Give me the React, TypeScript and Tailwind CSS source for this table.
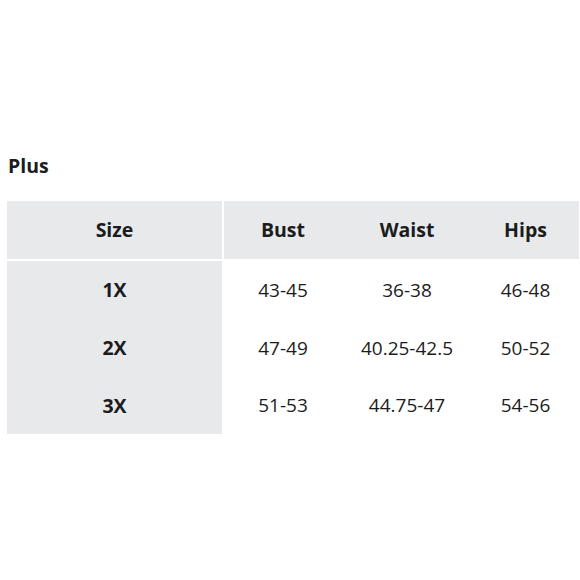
export default function App() {
  const rows = [
    { size: "1X", bust: "43-45", waist: "36-38", hips: "46-48" },
    { size: "2X", bust: "47-49", waist: "40.25-42.5", hips: "50-52" },
    { size: "3X", bust: "51-53", waist: "44.75-47", hips: "54-56" },
  ]

  return (
    <div className="w-[580px] h-[580px] bg-white pt-[152px] pl-[7px] text-[#1c1c1c]" style={{ fontFamily: '"Open Sans", sans-serif' }}>
      <h2 className="text-[19.5px] font-bold leading-[28px] pl-px">Plus</h2>

      <div className="mt-[21px] w-[572px]">
        {/* header */}
        <div className="flex gap-[2px] h-[58px]">
          <div className="w-[215px] bg-[#e8e9eb] flex items-center justify-center text-[19.5px] font-bold">Size</div>
          <div className="flex-1 bg-[#e8e9eb] grid grid-cols-[118px_130px_1fr] items-center text-center text-[19.5px] font-bold">
            <div>Bust</div>
            <div>Waist</div>
            <div>Hips</div>
          </div>
        </div>

        {/* body */}
        <div className="flex gap-[2px] mt-[2px]">
          <div className="w-[215px] bg-[#e8e9eb] flex flex-col">
            {rows.map((r) => (
              <div key={r.size} className="h-[58px] last:h-[57px] flex items-center justify-center text-[19.5px] font-bold">
                {r.size}
              </div>
            ))}
          </div>
          <div className="flex-1 flex flex-col">
            {rows.map((r) => (
              <div key={r.size} className="h-[58px] last:h-[57px] grid grid-cols-[118px_130px_1fr] items-center text-center text-[19px]">
                <div>{r.bust}</div>
                <div>{r.waist}</div>
                <div>{r.hips}</div>
              </div>
            ))}
          </div>
        </div>
      </div>
    </div>
  )
}
